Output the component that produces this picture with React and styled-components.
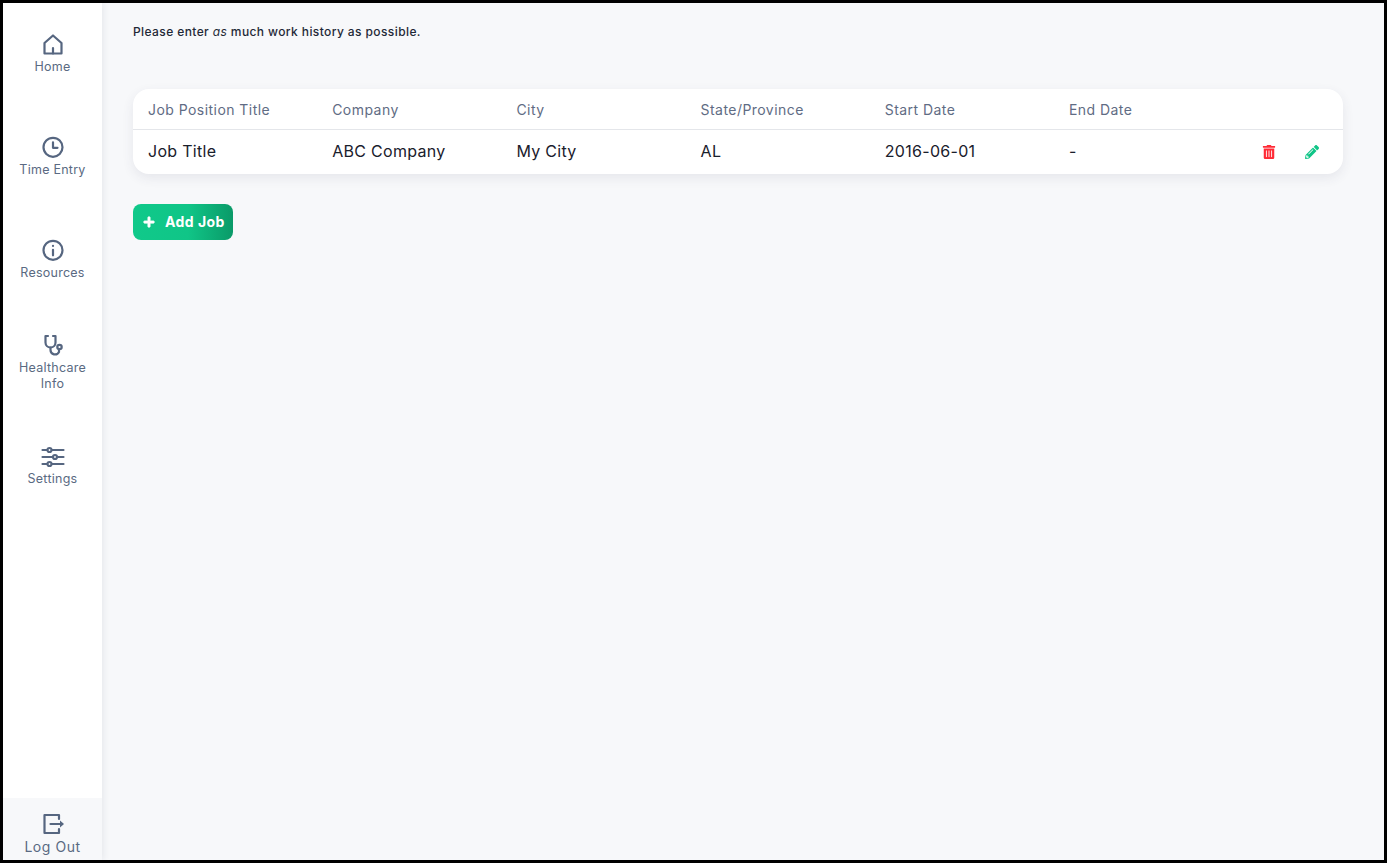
import React from 'react';
import styled, { createGlobalStyle } from 'styled-components';
import { FaPlus, FaTrashAlt, FaPencilAlt } from 'react-icons/fa';

const GlobalStyle = createGlobalStyle`
  html, body {
    margin: 0;
    height: 100%;
    font-family: Inter, "Open Sans", sans-serif;
    background: #000;
  }
  #root {
    height: 100%;
  }
`;

const Frame = styled.div`
  box-sizing: border-box;
  height: 863px;
  border: 3px solid #000;
  display: flex;
  background: #f7f8fa;
  overflow: hidden;
`;

const Sidebar = styled.nav`
  width: 99px;
  flex-shrink: 0;
  background: #fff;
  box-shadow: 2px 0 6px rgba(50, 60, 90, 0.08);
  display: flex;
  flex-direction: column;
  justify-content: space-between;
`;

const NavList = styled.div`
  display: flex;
  flex-direction: column;
  padding-top: 30px;
`;

const NavItem = styled.a`
  display: flex;
  flex-direction: column;
  align-items: center;
  height: ${props => props.height}px;
  color: #5a6a82;
  font-size: 12.5px;
  line-height: 16px;
  text-align: center;
  letter-spacing: 0.25px;
  svg {
    margin-bottom: 2px;
  }
`;

const LogOut = styled.a`
  height: 62px;
  box-sizing: border-box;
  padding-top: 14px;
  background: #f7f8fa;
  display: flex;
  flex-direction: column;
  align-items: center;
  color: #5a6a82;
  font-size: 14px;
  line-height: 18px;
  letter-spacing: 0.55px;
  svg {
    margin-bottom: 2px;
  }
`;

const Main = styled.main`
  flex: 1;
  padding: 20px 41px 0 31px;
`;

const Intro = styled.p`
  margin: 0 0 49px;
  font-size: 12px;
  line-height: 17px;
  font-weight: 500;
  color: #1f2937;
  letter-spacing: 0.4px;
  em {
    font-style: italic;
    font-weight: 400;
  }
`;

const Card = styled.div`
  background: #fff;
  border-radius: 16px;
  box-shadow: 0 4px 12px rgba(50, 60, 90, 0.09);
`;

const Row = styled.div`
  display: grid;
  grid-template-columns: repeat(6, 184.2px) 1fr;
  align-items: center;
  padding-left: 15px;
  height: ${props => props.height}px;
  border-bottom: ${props => props.divided ? '1px solid #e4e6ea' : 'none'};
`;

const HeadCell = styled.div`
  font-size: 14px;
  color: #5f6c84;
  letter-spacing: 0.45px;
`;

const Cell = styled.div`
  font-size: 16px;
  color: #1a202c;
  letter-spacing: 0.3px;
  padding-bottom: 2px;
`;

const Actions = styled.div`
  display: flex;
  justify-content: flex-end;
  align-items: center;
  gap: 29px;
  padding-right: 24px;
  padding-bottom: 1px;
`;

const IconButton = styled.button`
  border: none;
  background: none;
  padding: 0;
  display: flex;
  color: ${props => props.color};
  font-size: 14px;
  cursor: pointer;
`;

const AddButton = styled.button`
  margin-top: 30px;
  width: 100px;
  height: 36px;
  border: none;
  border-radius: 8px;
  background: linear-gradient(90deg, #10c98a 0%, #10c587 55%, #0a9a68 100%);
  color: #fff;
  font-family: inherit;
  font-size: 14px;
  font-weight: 700;
  letter-spacing: 0.45px;
  display: flex;
  align-items: center;
  gap: 10px;
  padding: 0 0 1px 10px;
  cursor: pointer;
  svg {
    stroke: #fff;
    stroke-width: 30;
  }
`;

const Icon = ({ size = 24, children }) => (
  <svg width={size} height={size} viewBox="0 0 24 24" fill="none" stroke="#566680" strokeWidth="2.2" strokeLinecap="round" strokeLinejoin="round">
    {children}
  </svg>
);

const columns = ['Job Position Title', 'Company', 'City', 'State/Province', 'Start Date', 'End Date'];
const job = ['Job Title', 'ABC Company', 'My City', 'AL', '2016-06-01', '-'];

export default function App() {
  return (
    <>
      <GlobalStyle />
      <Frame>
        <Sidebar>
          <NavList>
            <NavItem height={103}>
              <Icon>
                <path d="M3.5 20.5V10L12 2.5l8.5 7.500v10.500z" />
                <path d="M12 20.500v-5.500" />
              </Icon>
              Home
            </NavItem>
            <NavItem height={103}>
              <Icon>
                <circle cx="12" cy="11.300" r="9.500" />
                <path d="M12 6.300v5.500h4.500" />
              </Icon>
              Time Entry
            </NavItem>
            <NavItem height={95}>
              <Icon>
                <circle cx="12" cy="11.300" r="9.500" />
                <path d="M12 10.800v5.500M12 6.800v.1" />
              </Icon>
              Resources
            </NavItem>
            <NavItem height={111}>
              <Icon>
                <path d="M7 2H4.500v6.500a5 5 0 0 0 10 0V2H12" />
                <path d="M9.500 13.500v2.500a4.500 4.500 0 0 0 8.500 2v-2.500" />
                <circle cx="18.500" cy="13" r="2.200" />
              </Icon>
              Healthcare
              <br />
              Info
            </NavItem>
            <NavItem height={60}>
              <Icon>
                <path d="M1.500 5h21M1.500 12h21M1.500 19h21" />
                <circle cx="8.500" cy="5" r="2" fill="#fff" />
                <circle cx="14" cy="12" r="2" fill="#fff" />
                <circle cx="8.500" cy="19" r="2" fill="#fff" />
              </Icon>
              Settings
            </NavItem>
          </NavList>
          <LogOut>
            <Icon>
              <path d="M18 7V3H3.500v18H18v-4" />
              <path d="M9.500 12H19" />
              <path d="M19 8.500 23 12l-4 3.500z" fill="#566680" stroke="none" />
            </Icon>
            Log Out
          </LogOut>
        </Sidebar>
        <Main>
          <Intro>
            Please enter <em>as</em> much work history as possible.
          </Intro>
          <Card>
            <Row height={40} divided>
              {columns.map(name => (
                <HeadCell key={name}>{name}</HeadCell>
              ))}
            </Row>
            <Row height={44}>
              {job.map(value => (
                <Cell key={value}>{value}</Cell>
              ))}
              <Actions>
                <IconButton color="#ff2b36" aria-label="Delete">
                  <FaTrashAlt />
                </IconButton>
                <IconButton color="#10c587" aria-label="Edit">
                  <FaPencilAlt />
                </IconButton>
              </Actions>
            </Row>
          </Card>
          <AddButton>
            <FaPlus size={12} />
            Add Job
          </AddButton>
        </Main>
      </Frame>
    </>
  );
}
